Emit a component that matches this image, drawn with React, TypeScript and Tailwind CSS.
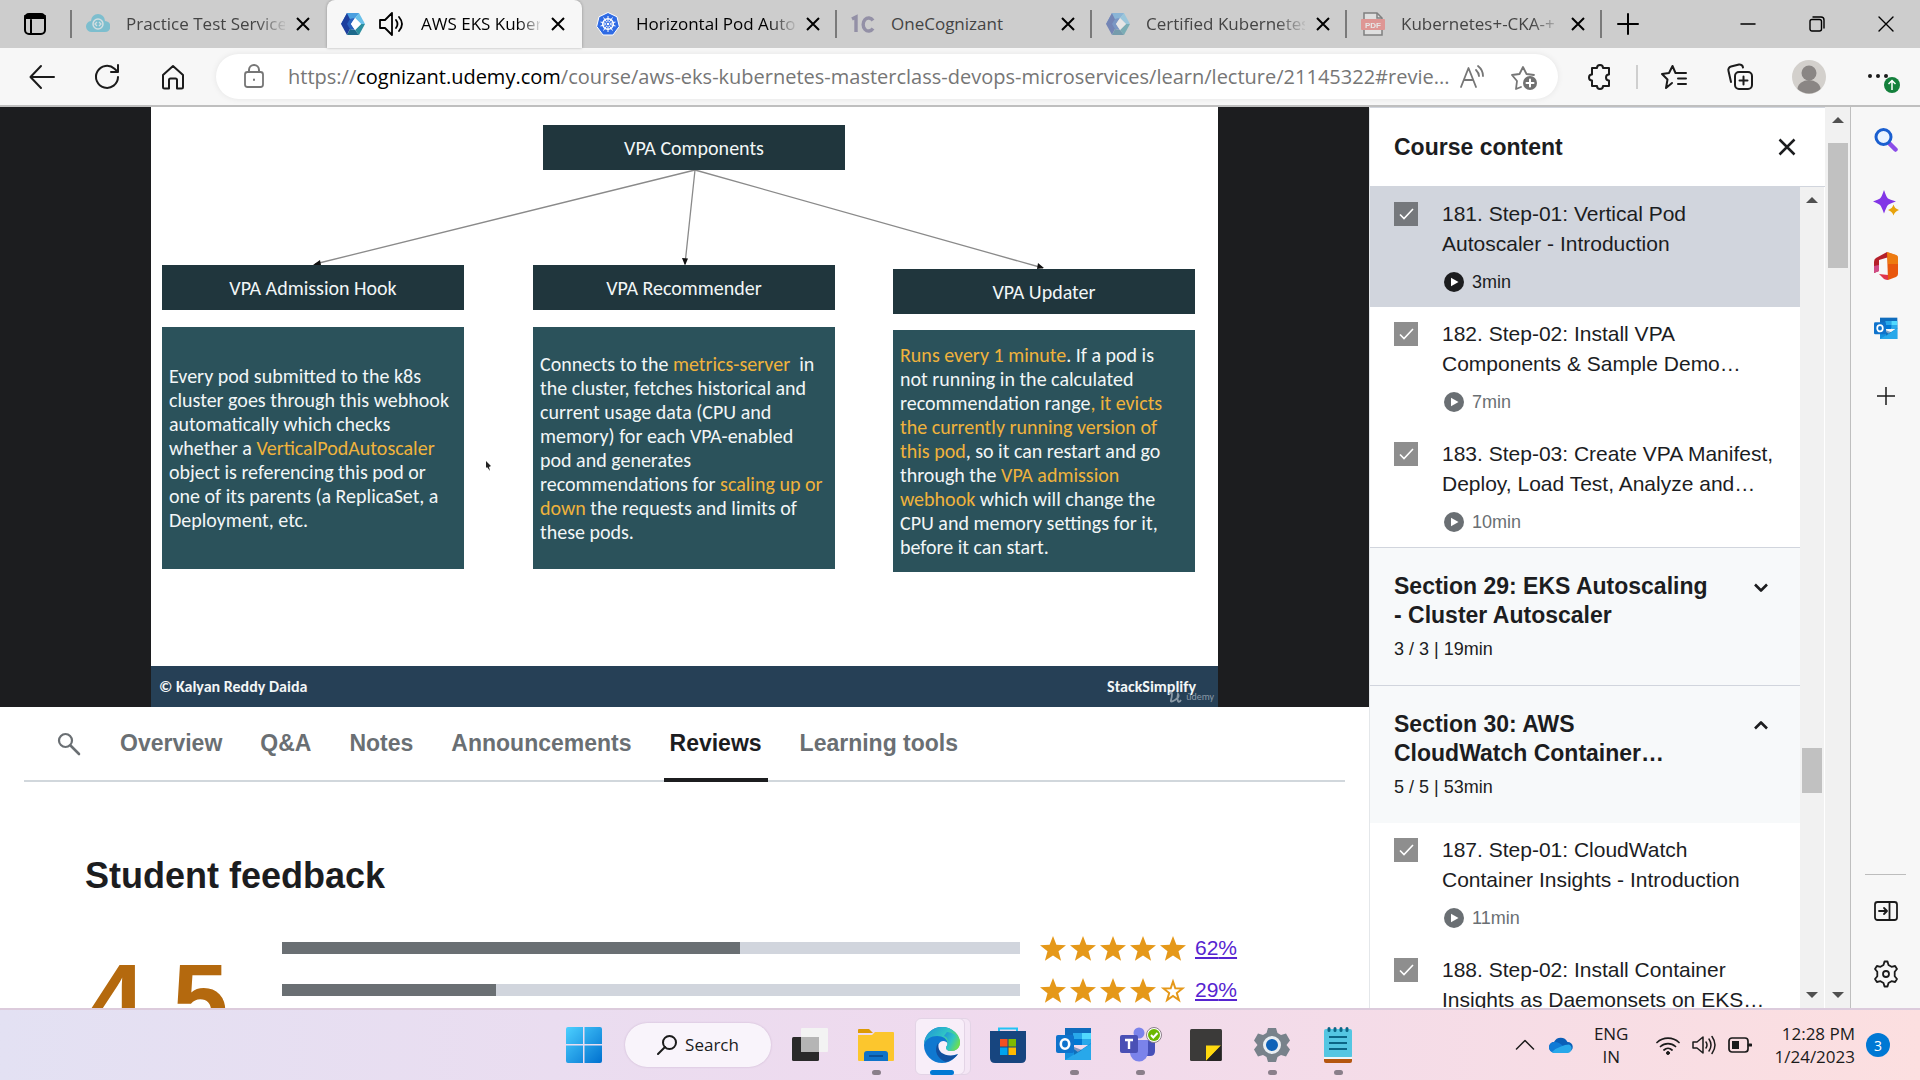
import React from "react";

const ui = "font-['Open_Sans','Noto_Sans',sans-serif]";

type SvgProps = { children: React.ReactNode; className?: string; box?: string };

function Line({ children, className = "size-7", box = "0 0 28 28" }: SvgProps) {
  return (
    <svg viewBox={box} className={className} fill="none" stroke="currentColor" strokeWidth="2" strokeLinecap="round" strokeLinejoin="round" aria-hidden="true">
      {children}
    </svg>
  );
}

function Art({ children, className = "size-9", box = "0 0 36 36" }: SvgProps) {
  return (
    <svg viewBox={box} className={className} fill="none" aria-hidden="true">
      {children}
    </svg>
  );
}

/* ---------- tab strip ---------- */

function HexIcon() {
  return (
    <Art className="size-6" box="0 0 24 24">
      <path d="M6 1h12l-5 6H9l-3 5H0z" fill="#3a7fd0" />
      <path d="M0 12 6 1l3 6v10l-3 6z" fill="#1d3f9e" />
      <path d="M6 1h12l-4 5-5 1z" fill="#4a9fe0" />
      <path d="M18 1l6 11h-4l-6-6z" fill="#69c0ea" />
      <path d="M24 12l-6 11-4-5 6-6z" fill="#2c8f9f" />
      <path d="M6 23h12l-4-5-5-1z" fill="#1d6a8c" />
      <path d="M9 7l5-1-4 6 4 6-5-1-3-5z" fill="#2a62bd" />
      <path d="M14 6l6 6-6 6-4-6z" fill="#fff" />
    </Art>
  );
}

function CloudIcon() {
  return (
    <Art className="size-6" box="0 0 24 24">
      <path d="M6 20a5.500 5.500 0 0 1-1-11 7 7 0 0 1 14 0 5.500 5.500 0 0 1 0 11z" fill="#2fb0d0" />
      <circle cx="12" cy="12" r="5" stroke="#d8f0f5" strokeWidth="1.500" />
      <path d="M11 10l-2 2 2 2M13 10l2 2-2 2" stroke="#d8f0f5" strokeWidth="1.300" />
    </Art>
  );
}

function K8sIcon() {
  return (
    <Art className="size-6" box="0 0 24 24">
      <path d="M12 .5l9 4.300 2.300 9.600-6.300 8.600H7L.7 14.400 3 4.800z" fill="#2f6be4" stroke="#fff" />
      <circle cx="12" cy="12" r="5.300" stroke="#fff" strokeWidth="1.500" />
      <path d="M12 4v16M4.500 10l15 4M4.500 14l15-4M7.500 5.500l9 13M16.500 5.500l-9 13" stroke="#fff" strokeWidth="1" />
      <circle cx="12" cy="12" r="1.800" fill="#fff" stroke="#2f6be4" />
    </Art>
  );
}

function OneCIcon() {
  return (
    <Art className="size-6" box="0 0 24 24">
      <path d="M1 7l4-2v15M22 8.500a5.500 6.500 0 1 0 0 8" stroke="#5b5480" strokeWidth="3.400" />
    </Art>
  );
}

function PdfIcon() {
  return (
    <Art className="size-6" box="0 0 24 24">
      <path d="M3 1h13l5 5v17H3z" fill="#f2f2f2" stroke="#333" strokeWidth="1.500" />
      <path d="M16 1v5h5" stroke="#333" strokeWidth="1.500" />
      <rect x="0" y="7" width="24" height="11" rx="1" fill="#f0605c" />
      <text x="12" y="15.500" textAnchor="middle" fontSize="8" fontWeight="700" fill="#fff" fontFamily="Liberation Sans">PDF</text>
    </Art>
  );
}

function CloseGlyph({ className = "size-4" }: { className?: string }) {
  return (
    <Line className={className} box="0 0 16 16">
      <path d="M2 2l12 12M14 2L2 14" strokeLinecap="butt" />
    </Line>
  );
}

type Tab = { title: string; icon: React.ReactNode; asleep?: boolean; active?: boolean; divider?: boolean };

const tabs: Tab[] = [
  { title: "Practice Test Service", icon: <CloudIcon />, asleep: true },
  { title: "AWS EKS Kuber", icon: <HexIcon />, active: true },
  { title: "Horizontal Pod Auto", icon: <K8sIcon />, divider: true },
  { title: "OneCognizant", icon: <OneCIcon />, asleep: true, divider: true },
  { title: "Certified Kubernetes", icon: <HexIcon />, asleep: true, divider: true },
  { title: "Kubernetes+-CKA-+", icon: <PdfIcon />, asleep: true, divider: true },
];

function TabStrip() {
  return (
    <header className="flex h-12 shrink-0 items-stretch bg-[#cdcdcd] text-black">
      <button aria-label="Tab actions" className="flex w-[70px] items-center justify-center">
        <Line className="size-6" box="0 0 24 24">
          <rect x="2" y="2" width="20" height="20" rx="4" />
          <path d="M2 6h20M2 4h20M8 8v14" />
        </Line>
      </button>
      <div className="my-2.5 w-0.5 bg-[#7a7a7a]" />
      {tabs.map((t) => (
        <React.Fragment key={t.title}>
          <div
            className={
              "flex w-[255px] items-center pl-3.5 pr-3 " +
              (t.active ? "rounded-t-lg bg-[#f7f7f7] shadow-[0_0_3px_rgba(0,0,0,0.3)]" : "")
            }
          >
            <span className={"shrink-0 " + (t.asleep ? "opacity-50" : "")}>{t.icon}</span>
            {t.active && (
              <Line className="ml-3 size-7 shrink-0">
                <path d="M3 10h5l7-7v22l-7-7H3zM19 10q3 4 0 8M22 7q6 7 0 14" strokeWidth="1.800" />
              </Line>
            )}
            <span
              className={
                "ml-4 min-w-0 flex-1 overflow-hidden whitespace-nowrap text-[17px] " +
                (t.title === "OneCognizant" ? "" : "[mask-image:linear-gradient(to_right,black_82%,transparent_102%)] ") +
                (t.asleep ? "text-[#444]" : "text-black")
              }
            >
              {t.title}
            </span>
            <button aria-label={"Close " + t.title} className="ml-1.5 shrink-0 px-1">
              <CloseGlyph />
            </button>
          </div>
          {t.divider && <div className="my-2.5 -ml-0.5 w-0.5 bg-[#7a7a7a]" />}
        </React.Fragment>
      ))}
      <button aria-label="New tab" className="flex w-[52px] items-center justify-center">
        <Line className="size-6" box="0 0 24 24"><path d="M12 2v20M2 12h20" /></Line>
      </button>
      <div className="ml-auto flex">
        <button aria-label="Minimize" className="flex w-[69px] items-center justify-center">
          <Line className="size-4" box="0 0 16 16"><path d="M1 8h14" strokeWidth="1.500" /></Line>
        </button>
        <button aria-label="Restore" className="flex w-[69px] items-center justify-center">
          <Line className="size-4" box="0 0 16 16">
            <rect x="1" y="3.500" width="11.500" height="11.500" rx="2" strokeWidth="1.400" />
            <path d="M4 1h8a3 3 0 0 1 3 3v8" strokeWidth="1.400" />
          </Line>
        </button>
        <button aria-label="Close window" className="flex w-[69px] items-center justify-center">
          <Line className="size-4" box="0 0 16 16"><path d="M1 1l14 14M15 1L1 15" strokeWidth="1.400" /></Line>
        </button>
      </div>
    </header>
  );
}

/* ---------- address bar ---------- */

function Toolbar() {
  return (
    <div className="flex h-[59px] shrink-0 items-center border-b-2 border-[#bfbfbf] bg-[#f7f7f7] pl-2.5 text-[#1b1b1b]">
      <button aria-label="Back" className="flex w-16 justify-center">
        <Line><path d="M3 14h23M13 3L2.500 14 13 25" /></Line>
      </button>
      <button aria-label="Refresh" className="flex w-[66px] justify-center">
        <Line><path d="M25 14a11 11 0 1 1-3.500-8.200L25 9M25 2v7h-7" /></Line>
      </button>
      <button aria-label="Home" className="mr-2.5 flex w-[66px] justify-center">
        <Line><path d="M4 12L14 3l10 9v12a1.500 1.500 0 0 1-1.500 1.500H18V17a1.500 1.500 0 0 0-1.500-1.500h-5A1.500 1.500 0 0 0 10 17v8.500H5.500A1.500 1.500 0 0 1 4 24z" /></Line>
      </button>
      <div className="flex h-[45px] min-w-0 flex-1 items-center rounded-full bg-white pl-6 pr-5 text-[#767676] shadow-[0_0_6px_rgba(0,0,0,0.08)]">
        <Line className="mr-5 size-7 shrink-0">
          <rect x="5" y="9" width="18" height="15" rx="2.500" strokeWidth="1.800" />
          <path d="M9 9V7a5 5 0 0 1 10 0v2M14 16.500v.5" />
        </Line>
        <a href="#url" className="min-w-0 flex-1 overflow-hidden whitespace-nowrap text-[20px]">
          https://<span className="text-black">cognizant.udemy.com</span>/course/aws-eks-kubernetes-masterclass-devops-microservices/learn/lecture/21145322#revie...
        </a>
        <button aria-label="Read aloud" className="ml-1">
          <Line><path d="M3 24L10.500 5 18 24M6 17h9M18 7q3 3 3 6M20 3q5 4 5 10" strokeWidth="1.800" /></Line>
        </button>
        <button aria-label="Add to favorites" className="ml-6">
          <Line>
            <path d="M11 24l-5 2 1-8-5-6 7.500-1L13 4l3.500 7 7.500 1" strokeWidth="1.800" />
            <circle cx="20" cy="20" r="7" fill="#707070" stroke="none" />
            <path d="M20 16.500v7M16.500 20h7" stroke="#fff" />
          </Line>
        </button>
      </div>
      <div className="flex items-center pl-7">
        <button aria-label="Extensions">
          <Line><path d="M6 5h5a3 3 0 0 1 6 0h6v6.500a3 3 0 0 0 0 6V23h-6a3 3 0 0 1-6 0H6v-5.500a3 3 0 0 1 0-6z" /></Line>
        </button>
        <span className="mx-[22px] h-6 w-0.5 bg-[#cfcfcf]" />
        <button aria-label="Favorites">
          <Line><path d="M12 20l-6 5 1.500-8.500L2 11l7-1 3.500-7 3 7H26M18 15.500h8M18 21h8" /></Line>
        </button>
        <button aria-label="Collections" className="ml-[38px]">
          <Line>
            <rect x="9" y="9" width="17" height="17" rx="4" />
            <path d="M17.500 13.500v8M13.500 17.500h8M5 19L2.500 8A3.500 3.500 0 0 1 5 3.500l8-2a3.500 3.500 0 0 1 4 3" />
          </Line>
        </button>
        <button aria-label="Profile" className="ml-[38px]">
          <Art className="size-[34px]" box="0 0 34 34">
            <circle cx="17" cy="17" r="17" fill="#d3d0cc" />
            <circle cx="17" cy="13" r="7.500" fill="#8a8684" />
            <path d="M5.500 29a11.500 9 0 0 1 23 0 17 17 0 0 1-23 0z" fill="#8a8684" />
          </Art>
        </button>
        <button aria-label="Settings and more" className="ml-[38px] mr-4">
          <svg viewBox="0 0 40 34" className="h-[34px] w-10" aria-hidden="true">
            <circle cx="6" cy="16" r="2" fill="#1b1b1b" />
            <circle cx="14" cy="16" r="2" fill="#1b1b1b" />
            <circle cx="22" cy="16" r="2" fill="#1b1b1b" />
            <circle cx="28" cy="25" r="8" fill="#14803c" />
            <path d="M28 30v-9M24.500 24l3.500-3.500 3.500 3.500" stroke="#fff" strokeWidth="1.500" fill="none" />
          </svg>
        </button>
      </div>
    </div>
  );
}

/* ---------- lecture slide ---------- */

const Hi = ({ children }: { children: React.ReactNode }) => <span className="text-[#f0b23c]">{children}</span>;

const head = "absolute flex h-[45px] w-[302px] items-center justify-center bg-[#20363d] text-[20px]";
const body = "absolute flex h-[242px] w-[302px] items-center whitespace-nowrap bg-[#2b525b] pl-[7px] text-[20px] leading-[24px]";

function Slide() {
  return (
    <div className="flex justify-center bg-[#1c1d1f]">
      <div className="relative h-[600px] w-[1067px] bg-white font-['Carlito','Lato',sans-serif] text-[#f2f6f7]">
        <svg viewBox="0 0 1067 600" className="absolute inset-0 size-full" aria-hidden="true">
          <g stroke="#8a8a8a" strokeWidth="1.300">
            <path d="M544 63L164 157M544 63L534 157M544 63L892 161" fill="none" />
          </g>
          <path d="M162 158l7-5 1 5zM531 151l6 .5-3 7zM887 156l6 5-7 1z" fill="#111" />
          <path d="M335 354l5 5-2 1 1 4-3-4-1 1z" fill="#222" />
        </svg>
        <div className={head + " left-[392px] top-[18px]"}>VPA Components</div>
        <div className={head + " left-[11px] top-[158px]"}>VPA Admission Hook</div>
        <div className={head + " left-[382px] top-[158px]"}>VPA Recommender</div>
        <div className={head + " left-[742px] top-[162px]"}>VPA Updater</div>
        <div className={body + " left-[11px] top-[220px]"}>
          <p>
            Every pod submitted to the k8s<br />
            cluster goes through this webhook<br />
            automatically which checks<br />
            whether a <Hi>VerticalPodAutoscaler</Hi><br />
            object is referencing this pod or<br />
            one of its parents (a ReplicaSet, a<br />
            Deployment, etc.
          </p>
        </div>
        <div className={body + " left-[382px] top-[220px]"}>
          <p>
            Connects to the <Hi>metrics-server</Hi>&nbsp; in<br />
            the cluster, fetches historical and<br />
            current usage data (CPU and<br />
            memory) for each VPA-enabled<br />
            pod and generates<br />
            recommendations for <Hi>scaling up or</Hi><br />
            <Hi>down</Hi> the requests and limits of<br />
            these pods.
          </p>
        </div>
        <div className={body + " left-[742px] top-[223px]"}>
          <p>
            <Hi>Runs every 1 minute</Hi>. If a pod is<br />
            not running in the calculated<br />
            recommendation range<Hi>, it evicts</Hi><br />
            <Hi>the currently running version of</Hi><br />
            <Hi>this pod</Hi>, so it can restart and go<br />
            through the <Hi>VPA admission</Hi><br />
            <Hi>webhook</Hi> which will change the<br />
            CPU and memory settings for it,<br />
            before it can start.
          </p>
        </div>
        <div className="absolute inset-x-0 bottom-0 flex h-[41px] items-center justify-between bg-[#264056] pl-2 pr-[22px] text-[16px] font-bold">
          <span>© Kalyan Reddy Daida</span>
          <span>StackSimplify</span>
        </div>
        <div className="absolute bottom-1 right-1 flex items-end gap-1 text-[10px] leading-3 text-[#8a99a6]">
          <svg viewBox="0 0 14 12" className="h-3 w-3.5" fill="none" stroke="currentColor" strokeWidth="1.800" aria-hidden="true">
            <path d="M1 3q3-3 3 0T3 9t4 0 3-6q-1 5 0 7t3-1" />
          </svg>
          <span>ûdemy</span>
        </div>
      </div>
    </div>
  );
}

/* ---------- lecture page ---------- */

const pageTabs = ["Overview", "Q&A", "Notes", "Announcements", "Reviews", "Learning tools"];

function LectureTabs() {
  return (
    <nav className="mx-6 flex h-[75px] border-b-2 border-[#d1d7dc] pl-[33px] font-bold text-[#6a6f73]">
      <button aria-label="Search course" className="mr-[33px]">
        <Line className="size-6" box="0 0 24 24">
          <circle cx="8.500" cy="8.500" r="6.500" strokeWidth="2.200" />
          <path d="M13.500 13.500L22 22" strokeWidth="2.600" />
        </Line>
      </button>
      <div className="flex gap-[26px]">
        {pageTabs.map((t) => (
          <button
            key={t}
            className={
              "-mb-0.5 px-1.5 text-[23px] leading-[72px] " +
              (t === "Reviews" ? "border-b-4 border-[#1c1d1f] text-[#1c1d1f]" : "border-b-4 border-transparent")
            }
          >
            {t}
          </button>
        ))}
      </div>
    </nav>
  );
}

function Star({ filled }: { filled: boolean }) {
  return (
    <svg viewBox="0 0 26 25" className="h-[25px] w-[26px]" aria-hidden="true">
      {filled ? (
        <path d="M13 0l3.400 8.800L26 9.300l-7.500 6 2.600 9.500L13 19.500l-8.100 5.300 2.600-9.500L0 9.300l9.600-.5z" fill="#e59819" />
      ) : (
        <path d="M13 3.500l2.300 6.700 7.200.3-5.700 4.500 2.100 7-5.900-4-5.900 4 2.100-7-5.700-4.500 7.200-.3z" fill="none" stroke="#e59819" strokeWidth="2" />
      )}
    </svg>
  );
}

const ratings = [
  { stars: 5, pct: 62 },
  { stars: 4, pct: 29 },
];

function Feedback() {
  return (
    <section className="pl-[85px] pt-[72px] text-[#1c1d1f]">
      <h2 className="text-[36px] font-bold leading-[44px]">Student feedback</h2>
      <div className="mt-[29px] flex">
        <div className="w-[197px] shrink-0 pl-1 pt-5 text-[100px] font-bold leading-[104px] text-[#b4690e]">4.5</div>
        <div className="flex flex-1 flex-col">
          {ratings.map((r) => (
            <div key={r.stars} className="flex h-[42px] items-center pr-[131px]">
              <div className="h-3 flex-1 bg-[#d1d5dd]">
                <div className="h-full bg-[#6a6f73]" style={{ width: r.pct + "%" }} />
              </div>
              <div className="ml-5 flex gap-1">
                {[1, 2, 3, 4, 5].map((n) => <Star key={n} filled={n <= r.stars} />)}
              </div>
              <a href={"#rating-" + r.stars} className="ml-[9px] w-[43px] text-[21px] text-[#5624d0] underline decoration-2 underline-offset-2">{r.pct}%</a>
            </div>
          ))}
        </div>
      </div>
    </section>
  );
}

/* ---------- course content ---------- */

type LectureProps = { id: string; lines: [string, string]; time: string; current?: boolean };

function Lecture({ id, lines, time, current }: LectureProps) {
  return (
    <li className={"flex h-[120px] pl-6 pt-3 " + (current ? "bg-[#d1d5dd]" : "bg-white")}>
      <span className="mt-[3px] grid size-6 shrink-0">
        <input id={id} type="checkbox" defaultChecked disabled className={"col-start-1 row-start-1 size-6 appearance-none " + (current ? "bg-[#75787c]" : "bg-[#8e8e8e]")} />
        <svg viewBox="0 0 24 24" className="col-start-1 row-start-1 size-6" fill="none" stroke="#fff" strokeWidth="1.600" aria-hidden="true">
          <path d="M6 12.500l4 4 9-9.500" />
        </svg>
      </span>
      <div className="ml-6 min-w-0">
        <label htmlFor={id} className="block whitespace-nowrap text-[21px] leading-[30px] text-[#1c1d1f]">
          {lines[0]}<br />{lines[1]}
        </label>
        <div className={"mt-2 flex items-center gap-2 pl-0.5 text-[18px] leading-[30px] " + (current ? "text-[#1c1d1f]" : "text-[#6a6f73]")}>
          <svg viewBox="0 0 20 20" className="size-5" aria-hidden="true">
            <circle cx="10" cy="10" r="10" fill="currentColor" />
            <path d="M7 5.800v8.400l7.500-4.200z" fill="#fff" />
          </svg>
          {time}
        </div>
      </div>
    </li>
  );
}

function SectionHead({ lines, meta, open }: { lines: [string, string]; meta: string; open?: boolean }) {
  return (
    <div className="flex h-[138px] items-start justify-between border-t border-[#d1d5dd] bg-[#f7f9fa] pl-6 pr-[30px] pt-6 text-[#1c1d1f]">
      <div>
        <h3 className="whitespace-nowrap text-[23px] font-bold leading-[29px]">{lines[0]}<br />{lines[1]}</h3>
        <p className="mt-1 text-[18px] leading-[30px]">{meta}</p>
      </div>
      <button aria-label={open ? "Collapse section" : "Expand section"} className="mt-1.5">
        <Line className="size-[18px]" box="0 0 18 18">
          <path d={open ? "M3 12.500l6-6 6 6" : "M3 6.500l6 6 6-6"} strokeWidth="2.600" strokeLinecap="butt" />
        </Line>
      </button>
    </div>
  );
}

function ScrollBar({ className, thumb }: { className: string; thumb: string }) {
  return (
    <div className={"flex w-6 shrink-0 flex-col items-center bg-[#f1f1f1] " + className}>
      <svg viewBox="0 0 12 6" className="mt-2.5 h-1.5 w-3 shrink-0" aria-hidden="true"><path d="M6 0l6 6H0z" fill="#505050" /></svg>
      <div className={"w-5 bg-[#c1c1c1] " + thumb} />
      <svg viewBox="0 0 12 6" className="mb-2.5 mt-auto h-1.5 w-3 shrink-0" aria-hidden="true"><path d="M6 6L0 0h12z" fill="#505050" /></svg>
    </div>
  );
}

function CourseContent() {
  return (
    <aside className="flex w-[456px] shrink-0 flex-col border-l border-[#e4e7ea] bg-white">
      <div className="flex h-20 shrink-0 items-center justify-between border-y border-[#d1d5dd] pl-6 pr-7 text-[#1c1d1f]">
        <h2 className="text-[23px] font-bold">Course content</h2>
        <button aria-label="Close course content"><CloseGlyph className="size-5" /></button>
      </div>
      <div className="flex min-h-0 flex-1">
        <div className="min-w-0 flex-1 overflow-hidden">
          <ul>
            <Lecture id="l181" current lines={["181. Step-01: Vertical Pod", "Autoscaler - Introduction"]} time="3min" />
            <Lecture id="l182" lines={["182. Step-02: Install VPA", "Components & Sample Demo…"]} time="7min" />
            <Lecture id="l183" lines={["183. Step-03: Create VPA Manifest,", "Deploy, Load Test, Analyze and…"]} time="10min" />
          </ul>
          <SectionHead lines={["Section 29: EKS Autoscaling", "- Cluster Autoscaler"]} meta="3 / 3 | 19min" />
          <SectionHead open lines={["Section 30: AWS", "CloudWatch Container…"]} meta="5 / 5 | 53min" />
          <ul>
            <Lecture id="l187" lines={["187. Step-01: CloudWatch", "Container Insights - Introduction"]} time="11min" />
            <Lecture id="l188" lines={["188. Step-02: Install Container", "Insights as Daemonsets on EKS…"]} time="7min" />
          </ul>
        </div>
        <ScrollBar className="mr-px" thumb="mt-[545px] h-[45px]" />
      </div>
    </aside>
  );
}

/* ---------- browser side bar ---------- */

function OutlookArt({ className }: { className: string }) {
  return (
    <Art className={className}>
      <path d="M9 1h26v16H9z" fill="#0f6cbd" />
      <path d="M17 6h9v6h-9z" fill="#28a8ea" /><path d="M26 6h9v6h-9z" fill="#50d9ff" />
      <path d="M17 12h9v6h-9z" fill="#0078d4" /><path d="M26 12h9v6h-9z" fill="#28a8ea" />
      <path d="M9 16l13 9 13-9v17H9z" fill="#1490df" />
      <path d="M9 33l26-16v16z" fill="#28a8ea" />
      <path d="M18 20l8 3-8 5z" fill="#0a4f96" opacity=".5" />
      <rect x="0" y="8" width="18" height="18" rx="2" fill="#0f73cc" />
      <ellipse cx="9" cy="17" rx="4.200" ry="4.700" stroke="#fff" strokeWidth="2.600" />
    </Art>
  );
}

function EdgeSidebar() {
  const cell = "flex h-[63px] items-center justify-center";
  return (
    <aside className="flex w-[70px] shrink-0 flex-col border-l border-[#bfbfbf] bg-[#f7f7f7] pt-px text-[#1b1b1b]">
      <button aria-label="Search" className={cell}>
        <Art className="size-6" box="0 0 24 24">
          <path d="M15.500 15.500l6 6" stroke="#8b4de8" strokeWidth="4.500" strokeLinecap="round" />
          <circle cx="9.500" cy="9" r="7.500" fill="#eaf4ff" stroke="#1a5fd0" strokeWidth="3" />
        </Art>
      </button>
      <button aria-label="Discover" className={cell}>
        <Art className="size-[26px]" box="0 0 26 26">
          <path d="M11 0q2.500 7.500 4 8.500t8 3q-6.500 2-8 3.500T11 23.500q-2.500-7-4-8.500t-7-3.500q5.500-2 7-3T11 0z" fill="#8235e6" />
          <path d="M20.500 14.500q1 4 5.500 5.500-4.500 1.500-5.500 5.500-1-4-5.500-5.500 4.500-1.500 5.500-5.500z" fill="#e8a30c" />
        </Art>
      </button>
      <button aria-label="Office" className={cell}>
        <Art className="h-7 w-6" box="0 0 24 28">
          <path d="M13 0L2 6Q0 7 0 10v11l5-2V8l10-3z" fill="#b5202a" />
          <path d="M0 14v7l5-2v-6z" fill="#d04a86" />
          <path d="M13 0l9 3q2 .7 2 3v16q0 2-2 3l-8 3z" fill="#e8570e" />
          <path d="M13 0l9 3q2 .7 2 3v6H14z" fill="#f08a12" opacity=".7" />
          <path d="M5 22l9 1v5q-2 0-4-1z" fill="#e0344a" />
        </Art>
      </button>
      <button aria-label="Outlook" className={cell}><OutlookArt className="size-6" /></button>
      <button aria-label="Add app" className={cell + " mt-1"}>
        <Line className="size-[18px]" box="0 0 18 18"><path d="M9 0v18M0 9h18" strokeWidth="1.500" /></Line>
      </button>
      <div className="mx-3.5 mt-auto h-px bg-[#bdbdbd]" />
      <button aria-label="Hide side bar" className={cell + " mt-1"}>
        <Line className="size-6" box="0 0 24 24">
          <rect x="1" y="3" width="22" height="18" rx="2.500" strokeWidth="1.800" />
          <path d="M15.500 3v18M5 12h7.500M10 9l3 3-3 3" strokeWidth="1.800" />
        </Line>
      </button>
      <button aria-label="Side bar settings" className={cell + " mb-[3px]"}>
        <Line className="size-7">
          <path d="M11.500 5l1-3.500h3l1 3.500 3 1.800 3.600-.8 1.900 3-2.300 2.800v4.400l2.300 2.800-1.900 3-3.600-.8-3 1.800-1 3.500h-3l-1-3.500-3-1.800-3.600.8-1.900-3 2.300-2.800v-4.400L3 9l1.900-3 3.600.8z" strokeWidth="1.800" />
          <circle cx="14" cy="14" r="3" strokeWidth="1.800" />
        </Line>
      </button>
    </aside>
  );
}

/* ---------- taskbar ---------- */

function TaskButton({ label, children, dot, active }: { label: string; children: React.ReactNode; dot?: boolean; active?: boolean }) {
  return (
    <button aria-label={label} className="relative flex h-[70px] w-[66px] items-center justify-center">
      {active && <span className="absolute bottom-[5px] left-2 right-1 top-2 rounded-md border border-[#e3d4e6] bg-[#f4e6f5]" />}
      {active && <span className="absolute bottom-[5px] left-1.5 right-2.5 top-2 rounded-md border border-[#e3d4e6] bg-[#f8eef9]" />}
      <span className="relative">{children}</span>
      {dot && <span className="absolute bottom-[5px] h-[5px] w-[9px] rounded-full bg-[#8a7f8a]" />}
      {active && <span className="absolute bottom-[5px] h-[5px] w-6 rounded-full bg-[#0078d4]" />}
    </button>
  );
}

function Taskbar() {
  return (
    <footer className={"grid h-[72px] shrink-0 grid-cols-[1fr_auto_1fr] items-center border-t-2 border-[#dccbdc] bg-linear-to-r from-[#e3e1f3] via-[#efdaee] to-[#fcdfe0] text-[#1b1b1b] " + ui}>
      <div />
      <div className="flex items-center pl-0.5">
        <TaskButton label="Start">
          <Art>
            <defs>
              <linearGradient id="win" x1="0" y1="0" x2="1" y2="1">
                <stop stopColor="#4cd0ff" /><stop offset="1" stopColor="#0070cf" />
              </linearGradient>
            </defs>
            <path d="M2 0h15v17H0V2a2 2 0 0 1 2-2zM18.500 0H34a2 2 0 0 1 2 2v15H18.500zM0 18.500h17V36H2a2 2 0 0 1-2-2zM18.500 18.500H36V34a2 2 0 0 1-2 2H18.500z" fill="url(#win)" />
          </Art>
        </TaskButton>
        <button className="ml-2 mr-1.5 flex h-11 w-[146px] items-center justify-center gap-2 rounded-full bg-[#f9f4fb] text-[17px] shadow-[0_0_2px_rgba(120,80,130,0.3)]">
          <Line className="size-5" box="0 0 20 20"><circle cx="12.500" cy="7.500" r="6.500" /><path d="M8 12l-7 7" /></Line>
          Search
        </button>
        <TaskButton label="Task view">
          <Art>
            <rect x="0" y="10" width="27" height="24" rx="1.500" fill="#2a2a2a" />
            <rect x="9" y="1" width="27" height="24" rx="1" fill="#f3f3f3" />
            <path d="M9 10h18v15H9z" fill="#b5b5b5" />
          </Art>
        </TaskButton>
        <TaskButton label="File Explorer" dot>
          <Art>
            <path d="M0 3q0-1 1-1h10l4 4H0z" fill="#dd9a04" />
            <path d="M0 8h14l3-3h18q1 0 1 1v27q0 1-1 1H1q-1 0-1-1z" fill="#fcc62d" />
            <path d="M6 34V27q0-3 3-3h18q3 0 3 3v7z" fill="#0f73c9" />
            <path d="M11 29h14" stroke="#0a4a8c" strokeWidth="1.600" />
          </Art>
        </TaskButton>
        <TaskButton label="Microsoft Edge" active>
          <Art>
            <defs>
              <linearGradient id="edgeTop" x1="0" y1="0" x2="1" y2=".6">
                <stop stopColor="#1f8fd8" /><stop offset=".55" stopColor="#2fc4c6" /><stop offset="1" stopColor="#6fe04a" />
              </linearGradient>
            </defs>
            <circle cx="18" cy="18" r="18" fill="#0f78d0" />
            <path d="M0 17C1 6 9 0 18 0c11 0 18 8 18 15 0 6-4 9-9 9-4 0-5-2-5-3.500 0-1 1.500-1.500 1.500-4C23.500 12 19 9 13 9 7 9 2 12 0 17z" fill="url(#edgeTop)" />
            <path d="M14 16c-5 8 0 16 8 19 5-1 10-5 12-8-7 3-19 1-20-11z" fill="#124f9f" />
            <path d="M36 15c0 6-4 9-9 9-4 0-5-2-5-3.500 0-1 1.500-1.500 1.500-4-1-3-7-4-9 1-1 7 5 11 12 11 3 0 5-1 7-1.500L36 27z" fill="#f8eef9" />
            <path d="M23 5c9 1 13 6 13 10 0 6-4 9-9 9-4 0-5-2-5-3.500 0-1 1.500-1.500 1.500-4C24 12 23 10 20 9z" fill="url(#edgeTop)" />
          </Art>
        </TaskButton>
        <TaskButton label="Microsoft Store">
          <Art>
            <path d="M9 6V1.500h18V6" stroke="#22c3f5" strokeWidth="2" />
            <path d="M0 4h36v27q0 5-5 5H5q-5 0-5-5z" fill="#17457f" />
            <path d="M10 12h7.500v7.500H10z" fill="#f25022" /><path d="M18.500 12H26v7.500h-7.500z" fill="#7fba00" />
            <path d="M10 20.500h7.500V28H10z" fill="#00a4ef" /><path d="M18.500 20.500H26V28h-7.500z" fill="#ffb900" />
          </Art>
        </TaskButton>
        <TaskButton label="Outlook" dot><OutlookArt className="size-9" /></TaskButton>
        <TaskButton label="Teams" dot>
          <Art className="h-9 w-11" box="0 0 44 36">
            <circle cx="21" cy="6" r="5.500" fill="#7b83eb" />
            <path d="M27 13h10v11q0 5-5 5h-4z" fill="#4650b8" />
            <path d="M12 13h18v12a9 9 0 0 1-18 1z" fill="#7b83eb" />
            <rect x="2" y="8" width="18" height="18" rx="2" fill="#4a50b5" />
            <path d="M7 13h8M11 13v9" stroke="#fff" strokeWidth="2.400" />
            <circle cx="36" cy="8" r="7.500" fill="#fff" stroke="#8a7f8a" />
            <circle cx="36" cy="8" r="6" fill="#6bb700" />
            <path d="M33 8l2.300 2.500L39.500 6" stroke="#fff" strokeWidth="2" />
          </Art>
        </TaskButton>
        <TaskButton label="Sticky Notes">
          <Art className="size-8" box="0 0 32 32">
            <rect width="32" height="32" rx="1.500" fill="#3b3a39" />
            <path d="M16 32V16.500h15z" fill="#ffd90f" /><path d="M16 32l15-15.500V32z" fill="#252423" />
          </Art>
        </TaskButton>
        <TaskButton label="Settings" dot>
          <Art>
            <path d="M14 1h8l1.500 5 3.500 2 5-1.500 4 7-3.500 4.500 3.500 4.500-4 7L27 28l-3.500 2L22 35h-8l-1.500-5L9 28l-5 1.500-4-7L3.500 18 0 13.500l4-7L9 8l3.500-2z" fill="#78828b" />
            <circle cx="18" cy="18" r="7.500" fill="#0d62b8" stroke="#e9eef2" strokeWidth="3" />
          </Art>
        </TaskButton>
        <TaskButton label="Notepad" dot>
          <Art className="h-9 w-7" box="0 0 28 36">
            <path d="M0 31h28v3q0 2-2 2H2q-2 0-2-2z" fill="#b5560f" />
            <rect y="2" width="28" height="29" rx="2" fill="#54c6e2" />
            <path d="M0 30h28v2H0z" fill="#eef6f8" />
            <path d="M5 10h18M5 16h18M5 22h18" stroke="#0b6586" strokeWidth="1.800" />
            <path d="M5 1.500v2M11 1.500v2M17 1.500v2M23 1.500v2" stroke="#0b6586" strokeWidth="3" strokeLinecap="round" />
          </Art>
        </TaskButton>
      </div>
      <div className="flex items-center justify-end pr-[30px]">
        <button aria-label="Show hidden icons" className="mr-3.5">
          <Line className="size-5" box="0 0 20 20"><path d="M1.500 14l8.500-8.500 8.500 8.500" strokeWidth="1.500" /></Line>
        </button>
        <button aria-label="OneDrive" className="mr-[21px]">
          <svg viewBox="0 0 24 16" className="h-4 w-6" aria-hidden="true">
            <path d="M5 15a5 5 0 0 1 0-10 7.500 7.500 0 0 1 13.500 0A5 5 0 0 1 19 15z" fill="#0a5fb8" />
            <path d="M5 16A5.500 5.500 0 0 1 6 5q4 0 8 4l-7 7z" fill="#0f7ad6" />
            <path d="M3 15q4-4 9-5.500 4-2 8-2A4.500 4.500 0 0 1 19 16H5q-1 0-2-1z" fill="#28a8ea" />
          </svg>
        </button>
        <button className="mr-7 text-center text-[17px] leading-[23px]">ENG<br />IN</button>
        <button aria-label="Network, sound and battery" className="mr-[22px] flex items-center gap-3">
          <Line className="size-6" box="0 0 24 24">
            <path d="M1 9.500a16 16 0 0 1 22 0M4.500 13.500a11 11 0 0 1 15 0M8 17a6 6 0 0 1 8 0" strokeWidth="1.700" />
            <circle cx="12" cy="20" r="1.500" fill="currentColor" strokeWidth="1" />
          </Line>
          <Line className="size-6" box="0 0 24 24">
            <path d="M1 9h4l6-5v16l-6-5H1zM14 9q2 3 0 6M17 6q4 6 0 12M20 3.500q6 8.500 0 17" strokeWidth="1.500" />
          </Line>
          <Line className="size-6" box="0 0 24 24">
            <rect x="1" y="5" width="19" height="14" rx="3" strokeWidth="1.700" />
            <path d="M4 8h7v8H4z" fill="currentColor" stroke="none" />
            <path d="M21 12h2" strokeWidth="3" />
          </Line>
        </button>
        <button className="mr-[11px] text-right text-[17px] leading-[23px]">12:28 PM<br />1/24/2023</button>
        <span className="flex size-6 items-center justify-center rounded-full bg-[#0078d4] text-[14px] text-white">3</span>
      </div>
    </footer>
  );
}

export default function App() {
  return (
    <div className="flex h-screen flex-col overflow-hidden bg-white">
      <div className={"shrink-0 " + ui}>
        <TabStrip />
        <Toolbar />
      </div>
      <div className="flex min-h-0 flex-1 overflow-hidden font-['Liberation_Sans',Arial,sans-serif]">
        <main className="min-w-0 flex-1 overflow-hidden">
          <Slide />
          <LectureTabs />
          <Feedback />
        </main>
        <CourseContent />
        <ScrollBar className="w-[25px]" thumb="mt-5 h-[125px]" />
        <EdgeSidebar />
      </div>
      <Taskbar />
    </div>
  );
}
